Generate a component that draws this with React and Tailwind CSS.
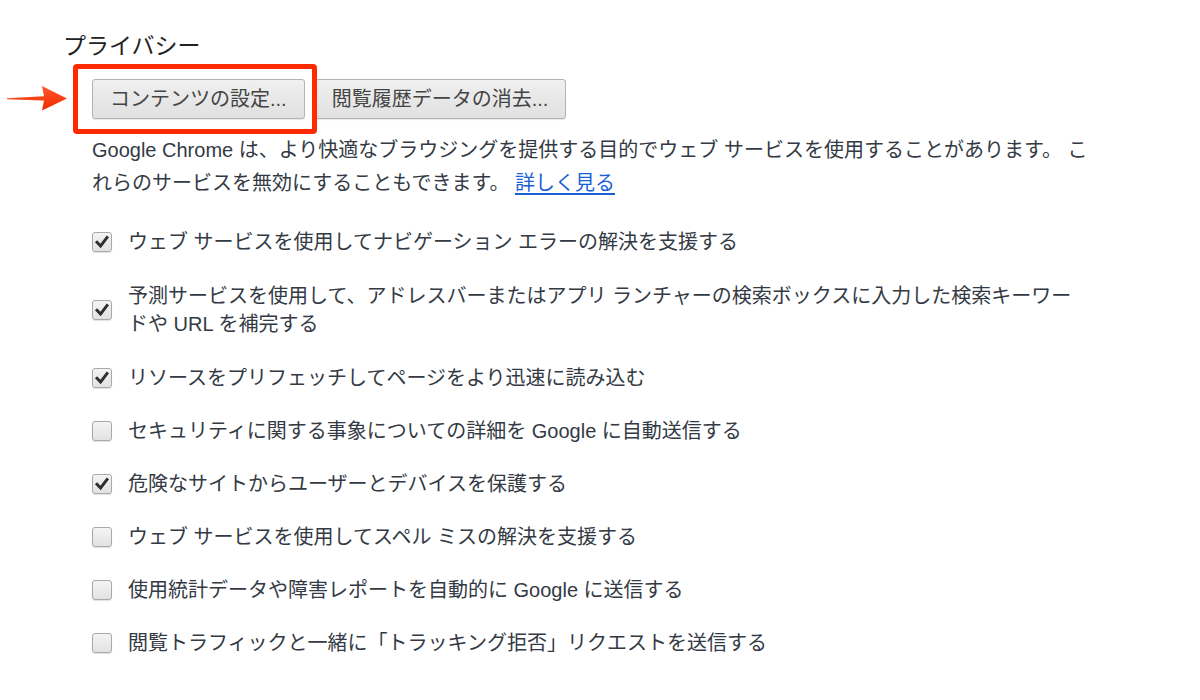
import React from "react";

const font = { fontFamily: '"Liberation Sans", "Noto Sans CJK JP", sans-serif' };

function Checkbox({ checked }) {
  return (
    <div className="relative w-[20px] h-[20px] shrink-0 rounded-[3px] border border-[#a9a9a9] bg-gradient-to-b from-[#f4f4f4] to-[#e2e2e2] shadow-[0_1px_1px_rgba(0,0,0,0.12)]">
      {checked && (
        <svg viewBox="0 0 20 20" className="absolute left-[-1px] top-[-1px] w-[20px] h-[20px]">
          <path d="M5 10.2 L8.6 14 L15 5.6" fill="none" stroke="#2e2e2e" strokeWidth="2.9" strokeLinecap="square" strokeLinejoin="miter" />
        </svg>
      )}
    </div>
  );
}

function Row({ checked, tall, children }) {
  return (
    <div className={tall ? "flex items-center gap-[16px] py-[13.5px]" : "flex items-center gap-[16px] py-[12.5px]"}>
      <Checkbox checked={checked} />
      <div className="leading-[28px]">{children}</div>
    </div>
  );
}

function Button({ children }) {
  return (
    <div className="h-[40px] px-[17px] flex items-center rounded-[3px] border border-[#b4b4b4] bg-gradient-to-b from-[#f0f0f0] to-[#e0e0e0] shadow-[0_1px_1px_rgba(0,0,0,0.1)] text-[#444] whitespace-nowrap">
      {children}
    </div>
  );
}

export default function App() {
  return (
    <div className="relative w-[1200px] h-[700px] bg-white overflow-hidden text-[#333a44]" style={font}>
      {/* annotation: arrow */}
      <svg className="absolute left-[6px] top-[84px]" width="64" height="28" viewBox="0 0 64 28">
        <defs>
          <linearGradient id="ag" x1="0" y1="0" x2="0" y2="1">
            <stop offset="0" stopColor="#ff5a2a" />
            <stop offset="1" stopColor="#f02800" />
          </linearGradient>
        </defs>
        <path d="M1 14.2 L38 12.2 L36 2 L61 14.5 L36 26.5 L38 16.6 L1 15.2 Z" fill="url(#ag)" />
      </svg>
      {/* annotation: red box */}
      <div className="absolute left-[73px] top-[64px] w-[244px] h-[70px] border-[5px] border-[#ff2a00] rounded-[4px]" />

      <div className="pl-[63px] pt-[32px]">
        <div className="text-[23px] leading-[28px] text-[#222]">プライバシー</div>
        <div className="pl-[29px]">
          <div className="flex gap-[9px] mt-[19px] text-[20px]">
            <Button>コンテンツの設定...</Button>
            <Button>閲覧履歴データの消去...</Button>
          </div>
          <div className="mt-[15px] text-[20px] leading-[33px] whitespace-nowrap">
            Google Chrome は、より快適なブラウジングを提供する目的でウェブ サービスを使用することがあります。 こ
            <br />
            れらのサービスを無効にすることもできます。 <span className="text-[#1a5fd6] underline underline-offset-[3px]">詳しく見る</span>
          </div>
          <div className="mt-[15px] text-[20px] whitespace-nowrap">
            <Row checked>ウェブ サービスを使用してナビゲーション エラーの解決を支援する</Row>
            <Row checked tall>
              予測サービスを使用して、アドレスバーまたはアプリ ランチャーの検索ボックスに入力した検索キーワー
              <br />
              ドや URL を補完する
            </Row>
            <Row checked>リソースをプリフェッチしてページをより迅速に読み込む</Row>
            <Row>セキュリティに関する事象についての詳細を Google に自動送信する</Row>
            <Row checked>危険なサイトからユーザーとデバイスを保護する</Row>
            <Row>ウェブ サービスを使用してスペル ミスの解決を支援する</Row>
            <Row>使用統計データや障害レポートを自動的に Google に送信する</Row>
            <Row>閲覧トラフィックと一緒に「トラッキング拒否」リクエストを送信する</Row>
          </div>
        </div>
      </div>
    </div>
  );
}
